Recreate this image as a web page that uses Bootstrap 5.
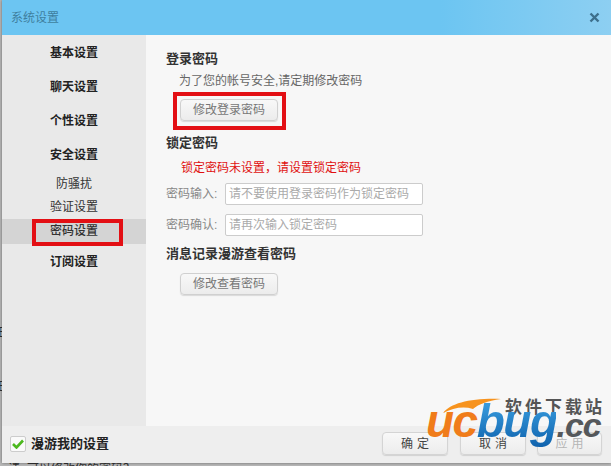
<!DOCTYPE html>
<html lang="zh-CN">
<head>
    <meta charset="UTF-8">
    <meta name="viewport" content="width=device-width, initial-scale=1.0">
    <title>系统设置</title>
    <link href="https://cdn.jsdelivr.net/npm/bootstrap@5.3.0/dist/css/bootstrap.min.css" rel="stylesheet">
    <style>
        html, body { height: 466px; overflow: hidden; }
        body {
            position: relative;
            background: #b9b9b9;
            font-family: "Liberation Sans", "Noto Sans CJK SC", sans-serif;
            font-size: 12px;
            color: #333;
            padding: 0 0 3px 2px;
        }
        .settings-win { height: 463px; background: #f7f7f7; box-shadow: 0 0 3px rgba(0,0,0,.45); }
        .title-bar { height: 35px; background: linear-gradient(90deg, #6cc5f2 0, #6cc5f2 72%, #8dcff2 100%); padding: 0 11px 0 9px; color: #3f7f9f; }
        .title-bar .close-x { width: 11px; height: 11px; }
        .side-nav { width: 144px; background: #e9e9e9; }
        .side-item { height: 34px; line-height: 36px; text-align: center; font-size: 12px; font-weight: 700; color: #222; }
        .side-sub { height: 23px; line-height: 23px; text-align: center; font-size: 12px; color: #333; }
        .side-sub.first { margin-top: 2px; }
        .side-sub.active-item { height: 25px; line-height: 25px; background: #d4d4d4; font-weight: 500; }
        .main-pane { padding: 15px 0 0 20px; }
        .sec-title { font-size: 13px; font-weight: 700; color: #333; line-height: 18px; }
        .sec-hint { color: #666; line-height: 18px; margin: 4px 0 0 13px; }
        .sec-warn { color: #e01010; line-height: 18px; margin: 7px 0 6px 15px; }
        .soft-btn {
            display: block;
            width: 98px; height: 22px; padding: 0;
            margin-left: 14px;
            background: linear-gradient(#f8f8f8, #ececec);
            border: 1px solid #d0d0d0; border-radius: 4px;
            box-shadow: 0 1px 1px rgba(0,0,0,.12);
            color: #777; font-size: 12px; line-height: 20px; text-align: center;
        }
        .login-btn { margin-top: 9px; }
        .view-btn { margin-top: 10px; }
        .lock-title { margin-top: 13px; }
        .roam-title { margin-top: 4px; }
        .pw-row { height: 22px; margin-bottom: 9px; }
        .pw-row label { width: 59px; color: #888; }
        .pw-row input {
            width: 198px; height: 22px; padding: 0 3px;
            background: #fff; border: 1px solid #ccc; border-radius: 2px;
            font-size: 12px; color: #555;
        }
        .pw-row input::placeholder { color: #aaa; opacity: 1; }
        .foot-bar { height: 37px; background: #eeeeee; padding: 0 9px 2px 8px; }
        .roam-box { width: 16px; height: 16px; background: #fafafa; border: 1px solid #ccc; border-radius: 2px; }
        .roam-label { font-size: 13px; font-weight: 700; color: #222; margin-left: 5px; }
        .foot-btn {
            width: 66px; height: 23px; padding: 0 0 0 4px;
            background: linear-gradient(#f8f8f8, #ececec);
            border: 1px solid #d4d4d4; border-radius: 4px;
            box-shadow: 0 1px 1px rgba(0,0,0,.12);
            font-size: 12px; letter-spacing: 4px; color: #444;
        }
        .foot-btn.ok-btn { margin-right: 12px; }
        .foot-btn.cancel-btn { margin-right: 11px; }
        .foot-btn:disabled { width: 65px; color: #b5b5b5; opacity: 1; }
        .mark-box { position: absolute; border: 4px solid #e30f14; pointer-events: none; }
        .mark-login { left: 173px; top: 92px; width: 113px; height: 38px; }
        .mark-nav { left: 32px; top: 219px; width: 91px; height: 27px; }
        .edge-text { position: absolute; left: -6px; color: #333; font-size: 12px; line-height: 14px; }
        .edge-a { top: 326px; }
        .edge-b { top: 380px; }
        .edge-c { top: 462px; left: 8px; }
        .wm-logo { position: absolute; left: 424px; top: 396px; width: 187px; height: 62px; pointer-events: none; }
        .wm-swoosh { position: absolute; left: 19px; top: 1px; }
        .wm-cn { position: absolute; left: 81px; top: 2px; font-size: 17px; font-weight: 700; letter-spacing: 3px; color: #555; line-height: 20px; white-space: nowrap; }
        .wm-word { position: absolute; left: 2px; top: 0; font: italic 700 46px/50px "Liberation Sans", sans-serif; white-space: nowrap; letter-spacing: -1.5px; }
        .wm-uc { color: #f07c1a; }
        .wm-bug { background: linear-gradient(#3fa6e6, #0f62ad); -webkit-background-clip: text; background-clip: text; color: transparent; }
        .wm-cc { color: #55585b; font-size: 34px; letter-spacing: -1px; }
    </style>
</head>
<body>
    <div class="edge-text edge-a">田</div>
    <div class="edge-text edge-b">田</div>
    <div class="edge-text edge-c">请=可以修改你的密码？</div>

    <div class="settings-win d-flex flex-column position-relative">
        <div class="title-bar d-flex align-items-center justify-content-between">
            <span>系统设置</span>
            <svg class="close-x" viewBox="0 0 11 11"><path d="M1.5 1.5l8 8M9.5 1.5l-8 8" stroke="#3d6f8c" stroke-width="2.4" fill="none"/></svg>
        </div>
        <div class="d-flex flex-grow-1">
            <div class="side-nav">
                <div class="side-item">基本设置</div>
                <div class="side-item">聊天设置</div>
                <div class="side-item">个性设置</div>
                <div class="side-item">安全设置</div>
                <div class="side-sub first">防骚扰</div>
                <div class="side-sub">验证设置</div>
                <div class="side-sub active-item">密码设置</div>
                <div class="side-item">订阅设置</div>
            </div>
            <div class="main-pane flex-grow-1">
                <div class="sec-title">登录密码</div>
                <div class="sec-hint">为了您的帐号安全,请定期修改密码</div>
                <button type="button" class="soft-btn login-btn">修改登录密码</button>
                <div class="sec-title lock-title">锁定密码</div>
                <div class="sec-warn">锁定密码未设置，请设置锁定密码</div>
                <div class="pw-row d-flex align-items-center">
                    <label>密码输入:</label>
                    <input type="text" placeholder="请不要使用登录密码作为锁定密码">
                </div>
                <div class="pw-row d-flex align-items-center">
                    <label>密码确认:</label>
                    <input type="text" placeholder="请再次输入锁定密码">
                </div>
                <div class="sec-title roam-title">消息记录漫游查看密码</div>
                <button type="button" class="soft-btn view-btn">修改查看密码</button>
            </div>
        </div>
        <div class="foot-bar d-flex align-items-center">
            <span class="roam-box d-flex align-items-center justify-content-center">
                <svg width="12" height="10" viewBox="0 0 12 10"><path d="M1 5l3.5 3.5L11 1.5" stroke="#4cb81e" stroke-width="2.6" fill="none"/></svg>
            </span>
            <span class="roam-label">漫游我的设置</span>
            <div class="ms-auto d-flex">
                <button type="button" class="foot-btn ok-btn">确定</button>
                <button type="button" class="foot-btn cancel-btn">取消</button>
                <button type="button" class="foot-btn" disabled>应用</button>
            </div>
        </div>
    </div>

    <div class="mark-box mark-login"></div>
    <div class="mark-box mark-nav"></div>

    <div class="wm-logo">
        <svg class="wm-swoosh" width="58" height="18" viewBox="0 0 58 18"><path d="M0 16C8 6 28 1 58 2 44 4 36 7 30 12 20 9 10 11 0 16Z" fill="#f7931e"/></svg>
        <span class="wm-cn">软件下载站</span>
        <span class="wm-word"><span class="wm-uc">uc</span><span class="wm-bug">bug</span><span class="wm-cc">.cc</span></span>
    </div>
    <script src="https://cdn.jsdelivr.net/npm/bootstrap@5.3.0/dist/js/bootstrap.bundle.min.js"></script>
</body>
</html>
